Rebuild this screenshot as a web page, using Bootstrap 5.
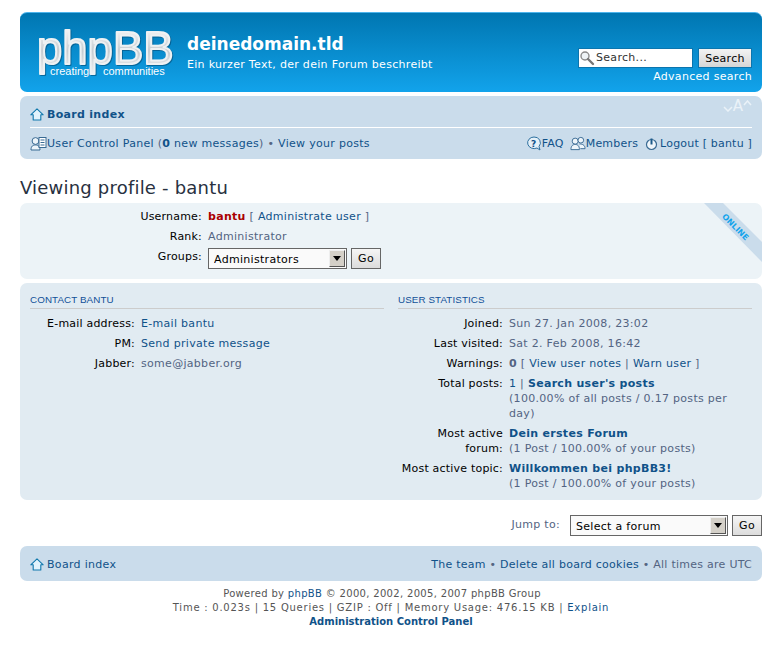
<!DOCTYPE html>
<html lang="en">
<head>
    <meta charset="UTF-8">
    <meta name="viewport" content="width=device-width, initial-scale=1.0">
    <title>deinedomain.tld - Viewing profile - bantu</title>
    <link rel="stylesheet" href="https://cdn.jsdelivr.net/npm/bootstrap@5.3.0/dist/css/bootstrap.min.css">
    <style>
        body { font-family: "DejaVu Sans", Verdana, sans-serif; font-size: 11px; line-height: 15px; letter-spacing: .3px; color: #536482; background: #fff; padding: 12px 20px 0; }
        a { color: #105289; text-decoration: none; }
        svg { display: block; flex: none; }
        .site-head { height: 80px; border-radius: 7px; background: linear-gradient(#0076b1, #12a3eb); border-top: 1px solid #4db4ec; padding: 0 10px 0 16px; color: #fff; }
        .site-title { font-size: 17px; line-height: 22px; font-weight: 700; letter-spacing: 0; margin: 20px 0 0; color: #fff; }
        .site-desc { font-size: 11px; line-height: 14px; margin: 3px 0 0; color: #fff; }
        .logo-wrap { margin-right: 11px; }
        .logo-img { margin-top: 7px; }
        .logo-main { filter: drop-shadow(1px 1px 0 rgba(4, 84, 130, .7)); }
        .search-col { margin-top: 35px; }
        .search-box { width: 115px; height: 20px; background: #fff; border: 1px solid #0b75ae; color: #333; font-size: 11px; line-height: 18px; gap: 1px; }
        .search-go { width: 54px; height: 20px; margin-left: 5px; padding: 0; font-size: 11px; letter-spacing: .3px; color: #000; border: 1px solid #0b75ae; border-radius: 0; background: linear-gradient(#f3f3f3, #d6d6d6); }
        .search-adv { color: #fff; text-align: right; margin-top: 1px; }
        .nav-panel { background: #cadceb; border-radius: 7px; margin-top: 4px; padding: 0 10px; height: 63px; }
        .crumb-row { height: 32px; border-bottom: 1px solid #fff; }
        .crumb-row .crumb-left { padding-top: 5px; }
        .crumb-row a.crumb { font-weight: 700; }
        .fontsize { color: #eaf2f8; font-size: 15px; line-height: 14px; letter-spacing: 0; margin-top: -11px; }
        .user-row { height: 31px; }
        .user-links { letter-spacing: .2px; }
        .ic-members { margin-left: 6px; }
        .ic-logout { margin-left: 7px; margin-right: 2px; }
        .page-head { font-size: 18px; line-height: 20px; letter-spacing: .2px; color: #28313f; font-weight: 400; margin: 19px 0 5px; }
        .box-a { position: relative; overflow: hidden; background: #ecf3f7; border-radius: 7px; height: 76px; padding-top: 6px; }
        .box-b { background: #e1ebf2; border-radius: 7px; margin-top: 4px; height: 217px; padding: 11px 10px 0; gap: 14px; }
        .ribbon { position: absolute; top: 0; right: 0; }
        .prof-row { display: flex; margin-bottom: 5px; min-height: 15px; }
        .prof-row .lbl { color: #000; text-align: right; flex: none; margin-right: 6px; letter-spacing: .2px; }
        .w-top .lbl { width: 182px; }
        .w-side .lbl { width: 105px; }
        .stat-col { width: 354px; flex: none; }
        .stat-head { font-family: "Liberation Sans", Arial, sans-serif; font-size: 9.8px; line-height: 12px; letter-spacing: .1px; text-transform: uppercase; color: #115098; border-bottom: 1px solid #ccc; margin: 0 0 7px; font-weight: 400; height: 15px; }
        .username { color: #aa0000; font-weight: 700; }
        .sel-wrap { position: relative; display: inline-block; }
        .old-select { display: block; appearance: none; border: 1px solid #666; border-radius: 0; background: #fafafa; color: #000; font: 11px/19px "DejaVu Sans", Verdana, sans-serif; letter-spacing: .3px; padding: 1px 5px 0; height: 21px; }
        .sel-arrow { position: absolute; top: 2px; right: 2px; width: 16px; height: 17px; background: #d4d0c8; border-top: 1px solid #eee; border-left: 1px solid #eee; border-right: 1px solid #555; border-bottom: 1px solid #555; pointer-events: none; }
        .sel-arrow::after { content: ""; position: absolute; left: 3px; top: 5px; border: 4px solid transparent; border-top: 5px solid #000; border-bottom: 0; }
        .go-btn { height: 21px; width: 30px; padding: 0; margin-left: 4px; font-size: 11px; letter-spacing: .3px; line-height: 18px; color: #000; border: 1px solid #666; border-radius: 0; background: linear-gradient(#f5f5f5, #dcdcdc); }
        .jump-row { margin-top: 15px; height: 21px; }
        .jump-lbl { margin-right: 10px; margin-top: -2px; }
        .foot-panel { background: #cadceb; border-radius: 7px; margin-top: 10px; height: 35px; padding: 2px 10px 0; }
        .foot-links { letter-spacing: .26px; }
        .copy-block { color: #555; font-size: 10px; line-height: 14px; text-align: center; margin-top: 6px; }
        .copy-block b { font-weight: 700; }
        .copy-a { letter-spacing: .32px; padding-right: 18px; }
        .copy-b { letter-spacing: .76px; }
        .copy-c { letter-spacing: 0; }
    </style>
</head>
<body>
    <div class="site-head d-flex justify-content-between">
        <div class="d-flex">
            <div class="logo-wrap">
                <svg class="logo-img" width="140" height="64" viewBox="0 0 140 64">
                    <defs>
                        <linearGradient id="lg" x1="0" y1="0" x2="0" y2="1">
                            <stop offset="0" stop-color="#ffffff"/>
                            <stop offset=".55" stop-color="#c6ccd1"/>
                            <stop offset="1" stop-color="#eef0f2"/>
                        </linearGradient>
                    </defs>
                    <text class="logo-main" x="1" y="44" font-family="Liberation Sans" font-size="45.500" letter-spacing="0" fill="url(#lg)" stroke="#eef1f3" stroke-width="2" stroke-linejoin="round">phpBB</text>
                    <text x="14" y="55" font-family="Liberation Sans" font-size="11" letter-spacing="0" fill="#fff">creating</text>
                    <text x="67" y="55" font-family="Liberation Sans" font-size="11" letter-spacing="0" fill="#fff">communities</text>
                </svg>
            </div>
            <div>
                <h1 class="site-title">deinedomain.tld</h1>
                <p class="site-desc">Ein kurzer Text, der dein Forum beschreibt</p>
            </div>
        </div>
        <div class="search-col">
            <div class="d-flex">
                <div class="search-box d-flex align-items-center">
                    <svg width="16" height="16" viewBox="0 0 16 16"><circle cx="6" cy="6" r="4" fill="#eef3f6" stroke="#8a8a8a" stroke-width="1.400"/><path d="M9 9l5 5" stroke="#777" stroke-width="2.400" stroke-linecap="round"/></svg>
                    <span>Search...</span>
                </div>
                <button type="button" class="search-go">Search</button>
            </div>
            <div class="search-adv">Advanced search</div>
        </div>
    </div>

    <div class="nav-panel">
        <div class="crumb-row d-flex justify-content-between align-items-center">
            <div class="crumb-left d-flex align-items-center" style="gap:3px">
                <svg width="14" height="13" viewBox="0 0 14 13"><path d="M7 .8L.8 6.800h2.400V12h7.600V6.800h2.400z" fill="#e2f3fc" stroke="#1078ad" stroke-width="1.100" stroke-linejoin="round"/></svg>
                <a class="crumb" href="#">Board index</a>
            </div>
            <div class="fontsize d-flex align-items-center">
                <svg width="10" height="6" viewBox="0 0 10 6" style="margin-top:5px"><path d="M1 1l4 4 4-4" fill="none" stroke="#eaf2f8" stroke-width="1.500"/></svg>
                <span>A</span>
                <svg width="9" height="6" viewBox="0 0 9 6" style="margin-top:-6px"><path d="M1 5l3.500-4L8 5" fill="none" stroke="#eaf2f8" stroke-width="1.500"/></svg>
            </div>
        </div>
        <div class="user-row d-flex justify-content-between align-items-center">
            <div class="d-flex align-items-center">
                <svg width="17" height="15" viewBox="0 0 17 15"><circle cx="5.500" cy="5" r="3.400" fill="#eef5fa" stroke="#396a93"/><path d="M1 14c0-4 2-5 4.500-5S10 10 10 14z" fill="#eef5fa" stroke="#396a93"/><rect x="9" y="1.500" width="7" height="10" fill="#fff" stroke="#396a93"/><path d="M10.500 4h4M10.500 6.500h4M10.500 9h4" stroke="#396a93"/></svg>
                <span><a href="#">User Control Panel</a> (<a href="#"><b>0</b> new messages</a>) • <a href="#">View your posts</a></span>
            </div>
            <div class="user-links d-flex align-items-center">
                <svg width="16" height="15" viewBox="0 0 16 15"><path d="M8 1a6.500 5.800 0 1 0 3 11l3 2-1-3.500A6 5.800 0 0 0 8 1z" fill="#e4f0f8" stroke="#2c6f9f"/><text x="5" y="10.500" font-family="DejaVu Sans" font-size="9" font-weight="700" letter-spacing="0" fill="#105289">?</text></svg>
                <a href="#">FAQ</a>
                <svg class="ic-members" width="16" height="15" viewBox="0 0 17 15"><circle cx="5.500" cy="5" r="3.200" fill="#eef5fa" stroke="#396a93"/><circle cx="11.500" cy="4" r="3" fill="#eef5fa" stroke="#396a93"/><path d="M1 14c0-4 2-5.500 4.500-5.500S10 10 10 14z" fill="#eef5fa" stroke="#396a93"/><path d="M10 8c3 0 6 1 6 5h-5" fill="#eef5fa" stroke="#396a93"/></svg>
                <a href="#">Members</a>
                <svg class="ic-logout" width="13" height="14" viewBox="0 0 13 14"><circle cx="6.500" cy="7.500" r="5" fill="#eef5fa" stroke="#396a93" stroke-width="1.200"/><path d="M6.500 1.500v6" stroke="#1c5a8a" stroke-width="2"/></svg>
                <a href="#">Logout [ bantu ]</a>
            </div>
        </div>
    </div>

    <h2 class="page-head">Viewing profile - bantu</h2>

    <div class="box-a w-top">
        <svg class="ribbon" width="60" height="60" viewBox="0 0 60 60">
            <polygon points="2,0 21,0 60,39 60,59" fill="#cadceb"/>
            <text transform="translate(19.500 14) rotate(45)" font-family="DejaVu Sans" font-size="8" font-weight="700" letter-spacing="0" fill="#12a3eb">ONLINE</text>
        </svg>
        <div class="prof-row"><div class="lbl">Username:</div><div><span class="username">bantu</span> [ <a href="#">Administrate user</a> ]</div></div>
        <div class="prof-row"><div class="lbl">Rank:</div><div>Administrator</div></div>
        <div class="prof-row"><div class="lbl">Groups:</div>
            <div class="d-flex" style="margin-top:-1px">
                <div class="sel-wrap">
                    <select class="old-select" style="width:139px"><option>Administrators</option></select>
                    <span class="sel-arrow"></span>
                </div>
                <button type="button" class="go-btn">Go</button>
            </div>
        </div>
    </div>

    <div class="box-b d-flex w-side">
        <div class="stat-col">
            <h3 class="stat-head">Contact bantu</h3>
            <div class="prof-row"><div class="lbl">E-mail address:</div><div><a href="#">E-mail bantu</a></div></div>
            <div class="prof-row"><div class="lbl">PM:</div><div><a href="#">Send private message</a></div></div>
            <div class="prof-row"><div class="lbl">Jabber:</div><div>some@jabber.org</div></div>
        </div>
        <div class="stat-col">
            <h3 class="stat-head">User statistics</h3>
            <div class="prof-row"><div class="lbl">Joined:</div><div>Sun 27. Jan 2008, 23:02</div></div>
            <div class="prof-row"><div class="lbl">Last visited:</div><div>Sat 2. Feb 2008, 16:42</div></div>
            <div class="prof-row"><div class="lbl">Warnings:</div><div><b>0</b> [ <a href="#">View user notes</a> | <a href="#">Warn user</a> ]</div></div>
            <div class="prof-row"><div class="lbl">Total posts:</div><div><a href="#">1</a> | <a href="#"><b>Search user's posts</b></a><br>(100.00% of all posts / 0.17 posts per<br>day)</div></div>
            <div class="prof-row"><div class="lbl">Most active<br>forum:</div><div><a href="#"><b>Dein erstes Forum</b></a><br>(1 Post / 100.00% of your posts)</div></div>
            <div class="prof-row"><div class="lbl">Most active topic:</div><div><a href="#"><b>Willkommen bei phpBB3!</b></a><br>(1 Post / 100.00% of your posts)</div></div>
        </div>
    </div>

    <div class="jump-row d-flex justify-content-end align-items-center">
        <span class="jump-lbl">Jump to:</span>
        <div class="sel-wrap">
            <select class="old-select" style="width:158px"><option>Select a forum</option></select>
            <span class="sel-arrow"></span>
        </div>
        <button type="button" class="go-btn">Go</button>
    </div>

    <div class="foot-panel d-flex justify-content-between align-items-center">
        <div class="d-flex align-items-center" style="gap:3px">
            <svg width="14" height="13" viewBox="0 0 14 13"><path d="M7 .8L.8 6.800h2.400V12h7.600V6.800h2.400z" fill="#e2f3fc" stroke="#1078ad" stroke-width="1.100" stroke-linejoin="round"/></svg>
            <a href="#">Board index</a>
        </div>
        <div class="foot-links"><a href="#">The team</a> • <a href="#">Delete all board cookies</a> • All times are UTC</div>
    </div>

    <div class="copy-block">
        <div class="copy-a">Powered by <a href="#">phpBB</a> © 2000, 2002, 2005, 2007 phpBB Group</div>
        <div class="copy-b">Time : 0.023s | 15 Queries | GZIP : Off | Memory Usage: 476.15 KB | <a href="#">Explain</a></div>
        <div class="copy-c"><a href="#"><b>Administration Control Panel</b></a></div>
    </div>
</body>
</html>
